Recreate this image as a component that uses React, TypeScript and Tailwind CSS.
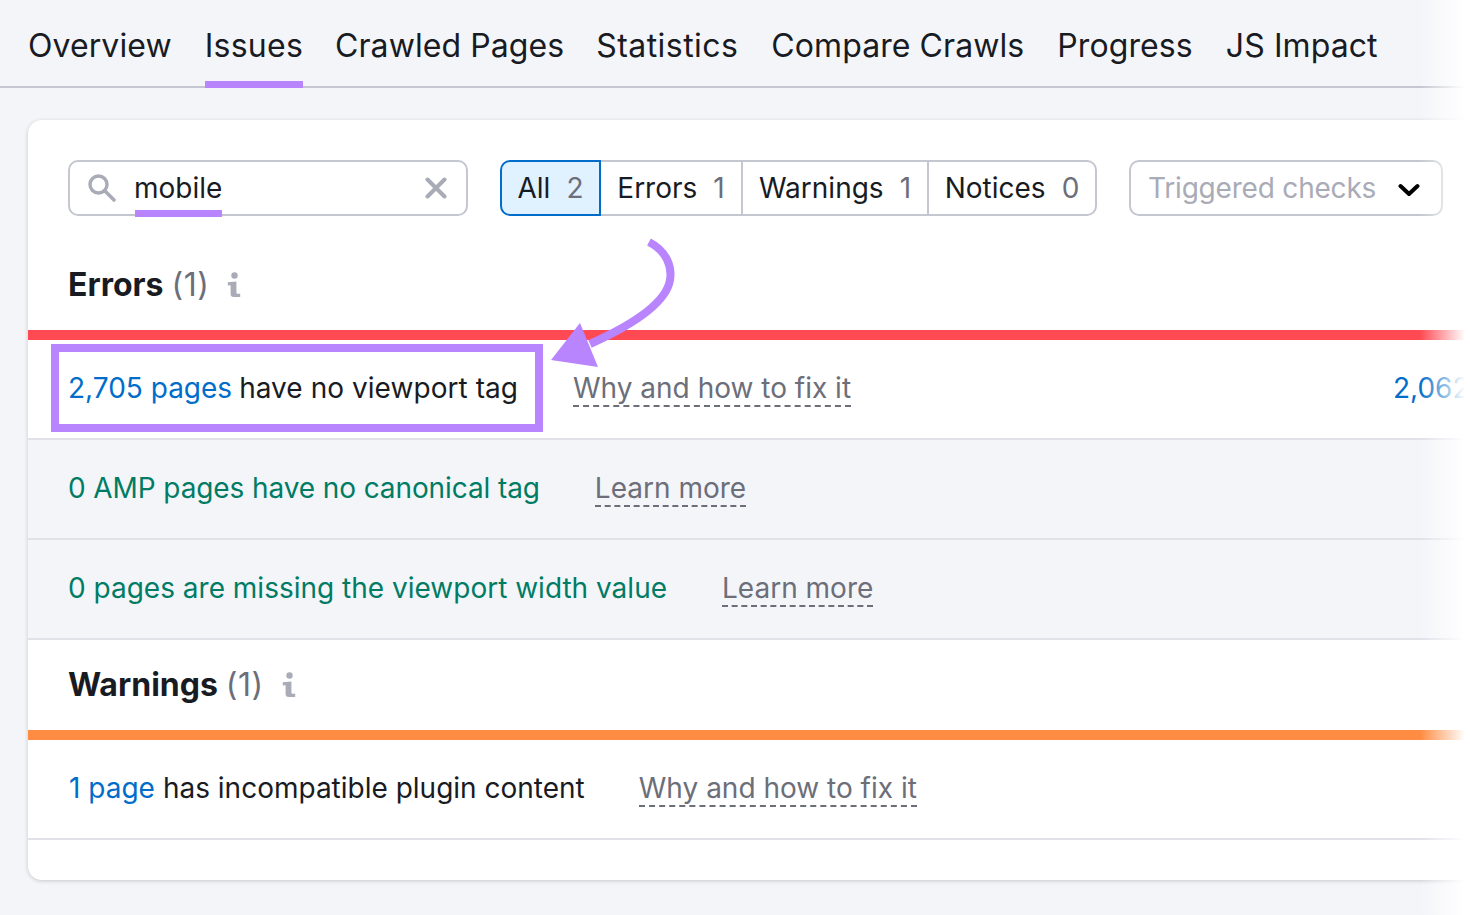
const tabs = ["Overview", "Issues", "Crawled Pages", "Statistics", "Compare Crawls", "Progress", "JS Impact"];

function InfoIcon() {
  return (
    <svg width="14" height="26" viewBox="0 0 14 26" className="text-[#a9abb6]" fill="currentColor">
      <circle cx="7.5" cy="3.5" r="3.2" />
      <path d="M0.8 10.2l8.6-.6v11c0 .8.4 1.2 1.1 1.2h2.7V25H6.8c-2.2 0-3.2-1-3.2-3v-8.8l-2.8.2z" />
    </svg>
  );
}

function DashedLink({ children }: { children: string }) {
  return (
    <span className="text-[#6c6e79] border-b-2 border-dashed border-[#6c6e79] leading-[34px] h-[36px] mt-[2px]">{children}</span>
  );
}

function SectionHeading({ title, count }: { title: string; count: string }) {
  return (
    <div className="h-[90px] pl-[40px] flex items-center gap-[18px]">
      <div className="text-[32px] leading-[40px] text-[#191b23]">
        <span className="font-bold">{title}</span>
        <span className="text-[#6c6e79] ml-[8px] tracking-[0.5px]">{count}</span>
      </div>
      <InfoIcon />
    </div>
  );
}

function FilterButton({ label, count, width, active, last }: { label: string; count: string; width: string; active?: boolean; last?: boolean }) {
  const cls = active
    ? "bg-[#e0f1ff] border-2 border-[#006dca] rounded-l-[10px] " + width
    : "border-y-2 border-r-2 border-[#c4c7cf] " + (last ? "rounded-r-[10px] " : "") + width;
  return (
    <div className={"h-[56px] pb-[1px] flex items-center justify-center gap-[16px] text-[28px] text-[#191b23] " + cls}>
      <span>{label}</span>
      <span className="text-[#6c6e79]">{count}</span>
    </div>
  );
}

export default function App() {
  return (
    <div className="relative h-[915px] w-[1470px] overflow-hidden bg-[#f4f5f9] font-['Inter',sans-serif]">
      {/* tabs */}
      <div className="h-[88px] border-b-2 border-[#c4c7cf] pl-[28px] flex gap-[33px]">
        {tabs.map((t) => (
          <div
            key={t}
            className={
              "h-[88px] pt-[23px] text-[32px] leading-[46px] text-[#191b23] whitespace-nowrap " +
              (t === "Issues" ? "border-b-[7px] border-[#b985ff] tracking-[0.25px] " : "") +
              (t === "Crawled Pages" ? "-ml-[1px] " : "") +
              (t === "Statistics" ? "-ml-[1px] tracking-[0.45px] " : "") +
              (t === "Progress" ? "tracking-[0.1px]" : "tracking-[0.08px]")
            }
          >
            {t}
          </div>
        ))}
      </div>

      {/* card */}
      <div className="mt-[32px] ml-[28px] w-[1500px] h-[760px] bg-white rounded-[14px] shadow-[0_1px_4px_rgba(25,27,35,0.2)] overflow-hidden">
        <div className="pt-[40px] pl-[40px] flex items-start">
          <div className="relative w-[400px] h-[56px] border-2 border-[#c4c7cf] rounded-[10px] flex items-center pl-[17px] pr-[19px]">
            <svg width="30" height="30" viewBox="0 0 30 30" fill="none" stroke="#a9abb6" strokeWidth="3.4" strokeLinecap="round">
              <circle cx="11.5" cy="11.5" r="8.5" />
              <path d="M18 18l9 9" strokeWidth="3.6" />
            </svg>
            <span className="ml-[17px] text-[28px] leading-[34px] text-[#191b23]">mobile</span>
            <svg className="ml-auto" width="22" height="22" viewBox="0 0 22 22" fill="none" stroke="#a9abb6" strokeWidth="4" strokeLinecap="round">
              <path d="M2.5 2.5l17 17M19.5 2.5l-17 17" />
            </svg>
            <div className="absolute left-[65px] top-[48px] w-[87px] h-[7px] bg-[#b985ff]" />
          </div>

          <div className="ml-[32px] flex">
            <FilterButton label="All" count="2" width="w-[101px]" active />
            <FilterButton label="Errors" count="1" width="w-[142px]" />
            <FilterButton label="Warnings" count="1" width="w-[186px]" />
            <FilterButton label="Notices" count="0" width="w-[168px]" last />
          </div>

          <div className="ml-[32px] w-[314px] h-[56px] pb-[1px] border-2 border-[#c4c7cf] rounded-[10px] flex items-center pl-[17px] text-[28px] text-[#a9abb6]">
            <span className="tracking-[-0.2px]">Triggered checks</span>
            <svg className="ml-[22px] mt-[5px]" width="22" height="14" viewBox="0 0 22 14" fill="none" stroke="#000" strokeWidth="4" strokeLinecap="round" strokeLinejoin="round">
              <path d="M2.5 3l8.5 8 8.5-8" />
            </svg>
          </div>
        </div>

        <div className="mt-[24px]">
          <SectionHeading title="Errors" count="(1)" />
        </div>
        <div className="h-[10px] bg-[#ff4953]" />

        <div className="relative h-[100px] pb-[2px] border-b-2 border-[#e0e1e9] pl-[40px] flex items-center text-[28px] whitespace-nowrap">
          <span className="text-[#006dca]">2,705 pages</span>
          <span className="text-[#191b23] ml-[7px] tracking-[0.05px]">have no viewport tag</span>
          <span className="ml-[55px] flex"><DashedLink>Why and how to fix it</DashedLink></span>
          <span className="absolute left-[1365px] text-[#006dca]">2,062</span>
          <div className="absolute left-[23px] top-[4px] w-[492px] h-[88px] border-[8px] border-[#b985ff]" />
        </div>

        <div className="h-[100px] pb-[2px] bg-[#f4f5f9] border-b-2 border-[#e0e1e9] pl-[40px] flex items-center gap-[55px] text-[28px] whitespace-nowrap">
          <span className="text-[#007c65] tracking-[-0.1px]">0 AMP pages have no canonical tag</span>
          <DashedLink>Learn more</DashedLink>
        </div>

        <div className="h-[100px] pb-[2px] bg-[#f4f5f9] border-b-2 border-[#e0e1e9] pl-[40px] flex items-center gap-[55px] text-[28px] whitespace-nowrap">
          <span className="text-[#007c65]">0 pages are missing the viewport width value</span>
          <DashedLink>Learn more</DashedLink>
        </div>

        <SectionHeading title="Warnings" count="(1)" />
        <div className="h-[10px] bg-[#ff8c43]" />

        <div className="h-[100px] pb-[2px] border-b-2 border-[#e0e1e9] pl-[41px] flex items-center text-[28px] whitespace-nowrap">
          <span className="text-[#006dca]">1 page</span>
          <span className="text-[#191b23] ml-[8px]">has incompatible plugin content</span>
          <span className="ml-[54px] flex"><DashedLink>Why and how to fix it</DashedLink></span>
        </div>
      </div>

      {/* arrow */}
      <svg className="absolute left-0 top-0 pointer-events-none" width="1470" height="915" fill="none">
        <path d="M649 242C668 252 672 268 670 280C666 304 630 326 590 344" stroke="#b985ff" strokeWidth="8" />
        <path d="M580 323L551 360L598 367Z" fill="#b985ff" />
      </svg>

      {/* right fade */}
      <div className="absolute right-0 top-0 w-[50px] h-full bg-gradient-to-r from-white/0 to-white to-[90%]" />
    </div>
  );
}
